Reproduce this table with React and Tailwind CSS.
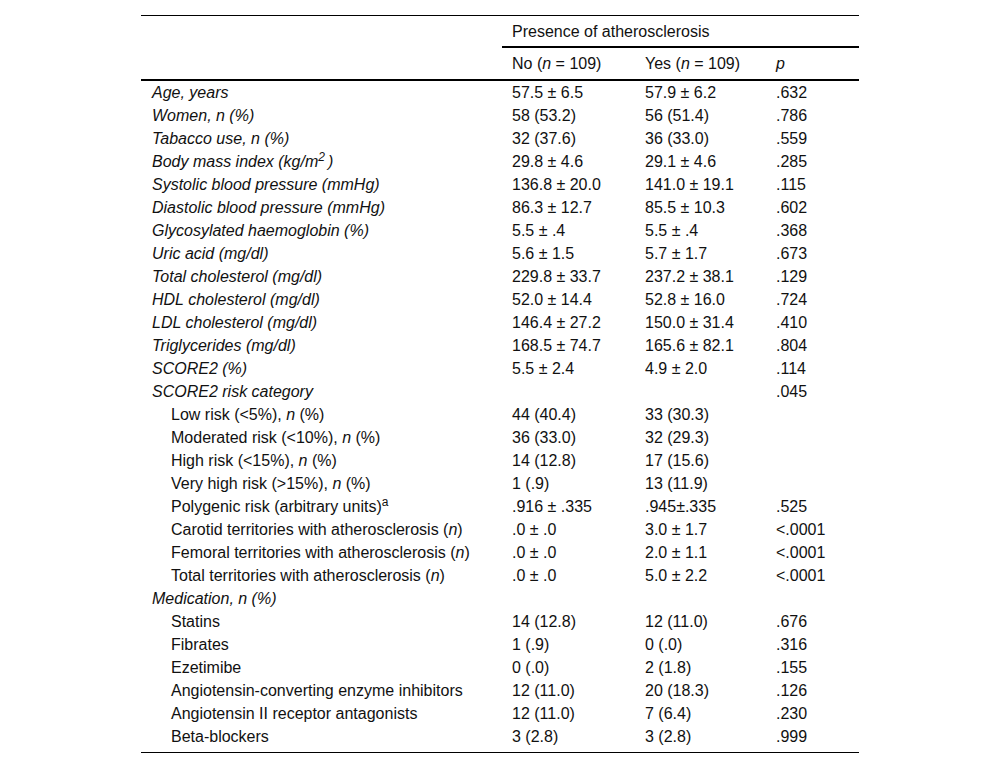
const rows = [
  { label: <i>Age, years</i>, no: "57.5 ± 6.5", yes: "57.9 ± 6.2", p: ".632" },
  { label: <i>Women, n (%)</i>, no: "58 (53.2)", yes: "56 (51.4)", p: ".786" },
  { label: <i>Tabacco use, n (%)</i>, no: "32 (37.6)", yes: "36 (33.0)", p: ".559" },
  {
    label: (
      <i>
        Body mass index (kg/m<sup className="text-[12px] mr-[3px]">2</sup>)
      </i>
    ),
    no: "29.8 ± 4.6",
    yes: "29.1 ± 4.6",
    p: ".285",
  },
  { label: <i>Systolic blood pressure (mmHg)</i>, no: "136.8 ± 20.0", yes: "141.0 ± 19.1", p: ".115" },
  { label: <i>Diastolic blood pressure (mmHg)</i>, no: "86.3 ± 12.7", yes: "85.5 ± 10.3", p: ".602" },
  { label: <i>Glycosylated haemoglobin (%)</i>, no: "5.5 ± .4", yes: "5.5 ± .4", p: ".368" },
  { label: <i>Uric acid (mg/dl)</i>, no: "5.6 ± 1.5", yes: "5.7 ± 1.7", p: ".673" },
  { label: <i>Total cholesterol (mg/dl)</i>, no: "229.8 ± 33.7", yes: "237.2 ± 38.1", p: ".129" },
  { label: <i>HDL cholesterol (mg/dl)</i>, no: "52.0 ± 14.4", yes: "52.8 ± 16.0", p: ".724" },
  { label: <i>LDL cholesterol (mg/dl)</i>, no: "146.4 ± 27.2", yes: "150.0 ± 31.4", p: ".410" },
  { label: <i>Triglycerides (mg/dl)</i>, no: "168.5 ± 74.7", yes: "165.6 ± 82.1", p: ".804" },
  { label: <i>SCORE2 (%)</i>, no: "5.5 ± 2.4", yes: "4.9 ± 2.0", p: ".114" },
  { label: <i>SCORE2 risk category</i>, no: "", yes: "", p: ".045" },
  { sub: true, label: <>Low risk (&lt;5%), <i>n</i> (%)</>, no: "44 (40.4)", yes: "33 (30.3)", p: "" },
  { sub: true, label: <>Moderated risk (&lt;10%), <i>n</i> (%)</>, no: "36 (33.0)", yes: "32 (29.3)", p: "" },
  { sub: true, label: <>High risk (&lt;15%), <i>n</i> (%)</>, no: "14 (12.8)", yes: "17 (15.6)", p: "" },
  { sub: true, label: <>Very high risk (&gt;15%), <i>n</i> (%)</>, no: "1 (.9)", yes: "13 (11.9)", p: "" },
  {
    sub: true,
    label: (
      <>
        Polygenic risk (arbitrary units)<sup className="text-[12px]">a</sup>
      </>
    ),
    no: ".916 ± .335",
    yes: ".945±.335",
    p: ".525",
  },
  { sub: true, label: <>Carotid territories with atherosclerosis (<i>n</i>)</>, no: ".0 ± .0", yes: "3.0 ± 1.7", p: "<.0001" },
  { sub: true, label: <>Femoral territories with atherosclerosis (<i>n</i>)</>, no: ".0 ± .0", yes: "2.0 ± 1.1", p: "<.0001" },
  { sub: true, label: <>Total territories with atherosclerosis (<i>n</i>)</>, no: ".0 ± .0", yes: "5.0 ± 2.2", p: "<.0001" },
  { label: <i>Medication, n (%)</i>, no: "", yes: "", p: "" },
  { sub: true, label: "Statins", no: "14 (12.8)", yes: "12 (11.0)", p: ".676" },
  { sub: true, label: "Fibrates", no: "1 (.9)", yes: "0 (.0)", p: ".316" },
  { sub: true, label: "Ezetimibe", no: "0 (.0)", yes: "2 (1.8)", p: ".155" },
  { sub: true, label: "Angiotensin-converting enzyme inhibitors", no: "12 (11.0)", yes: "20 (18.3)", p: ".126" },
  { sub: true, label: "Angiotensin II receptor antagonists", no: "12 (11.0)", yes: "7 (6.4)", p: ".230" },
  { sub: true, label: "Beta-blockers", no: "3 (2.8)", yes: "3 (2.8)", p: ".999" },
];

const cols = "grid grid-cols-[361px_133px_131px_93px]";

export default function App() {
  return (
    <div className="min-h-[770px] bg-white pt-[15px] text-[16px] leading-[23px] text-[#111] [font-family:'Liberation_Sans',Arial,sans-serif]">
      <div className="mx-auto w-[718px] border-t border-b border-black">
        {/* header */}
        <div className={`${cols} h-[32px] items-center`}>
          <div />
          <div className="col-span-3 border-b-2 border-black pl-[10px] h-full flex items-center pt-[1px]">
            Presence of atherosclerosis
          </div>
        </div>
        <div className={`${cols} h-[33px] items-center border-b-2 border-black`}>
          <div />
          <div className="pl-[10px]">
            No (<i>n</i> = 109)
          </div>
          <div className="pl-[10px]">
            Yes (<i>n</i> = 109)
          </div>
          <div className="pl-[10px]">
            <i>p</i>
          </div>
        </div>
        {/* body */}
        <div className="pb-[4px]">
          {rows.map((r, i) => (
            <div key={i} className={`${cols} h-[23px] items-center`}>
              <div className={r.sub ? "pl-[30px]" : "pl-[11px]"}>{r.label}</div>
              <div className="pl-[10px]">{r.no}</div>
              <div className="pl-[10px]">{r.yes}</div>
              <div className="pl-[10px]">{r.p}</div>
            </div>
          ))}
        </div>
      </div>
    </div>
  );
}
